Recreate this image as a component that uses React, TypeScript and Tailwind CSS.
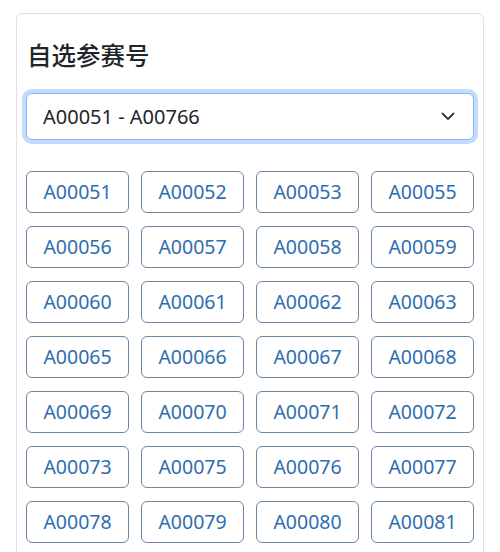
import React from 'react';

const numbers = [
  'A00051', 'A00052', 'A00053', 'A00055',
  'A00056', 'A00057', 'A00058', 'A00059',
  'A00060', 'A00061', 'A00062', 'A00063',
  'A00065', 'A00066', 'A00067', 'A00068',
  'A00069', 'A00070', 'A00071', 'A00072',
  'A00073', 'A00075', 'A00076', 'A00077',
  'A00078', 'A00079', 'A00080', 'A00081',
];

const App: React.FC = () => {
  return (
    <div
      className="min-h-screen bg-white px-4 pt-[13px]"
      style={{ fontFamily: '"Noto Sans", "Noto Sans CJK SC", sans-serif' }}
    >
      <div className="rounded-md border border-[#dcdfe3] px-[9px] pt-[27px] pb-6">
        {/* Title */}
        <h2 className="pl-px text-[24.5px] leading-[30px] font-medium text-[#212529]">自选参赛号</h2>

        {/* Range select (focused) */}
        <div className="mt-[22px] flex h-[47px] items-center justify-between rounded-md border border-[#86b7fe] bg-white pl-4 pr-[18px] ring-4 ring-[#0d6efd]/25">
          <span className="text-[20px] text-[#212529]">A00051 - A00766</span>
          <svg width="14" height="9" viewBox="0 0 14 9" fill="none">
            <path d="M1.5 1.5L7 7L12.5 1.5" stroke="#343a40" strokeWidth="1.8" strokeLinecap="round" strokeLinejoin="round" />
          </svg>
        </div>

        {/* Number buttons */}
        <div className="mt-[31px] grid grid-cols-4 gap-x-3 gap-y-[13px]">
          {numbers.map((n) => (
            <button
              key={n}
              className="flex h-[42px] items-center justify-center rounded-md border border-[#6b87a3] bg-white text-[19.5px] text-[#2f6db0]"
            >
              {n}
            </button>
          ))}
        </div>
      </div>
    </div>
  );
};

export default App;
